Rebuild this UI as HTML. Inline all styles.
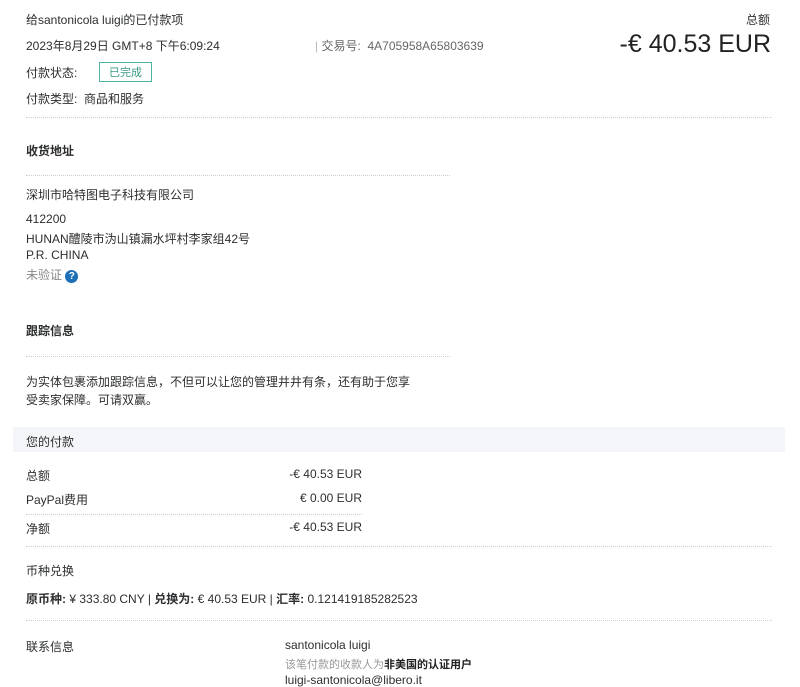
<!DOCTYPE html>
<html><head><meta charset="utf-8"><style>
body{margin:0;width:800px;height:683px;overflow:hidden;background:#fff;font-family:"Liberation Sans","Noto Sans CJK SC",sans-serif;font-size:12px;color:#2c2e2f;position:relative}
.a{position:absolute;white-space:nowrap}
.r{position:absolute;white-space:nowrap;text-align:right}
.hr{position:absolute;height:0;border-top:1px dotted #cfcfcf}
.b{font-weight:bold}
</style></head><body>
<div class="a" style="left:26px;top:11px">给santonicola luigi的已付款项</div>
<div class="a" style="left:26px;top:37px">2023年8月29日 GMT+8 下午6:09:24</div>
<div class="a" style="left:315px;top:37px;color:#666"><span style="color:#bbb">|</span> 交易号:&nbsp; 4A705958A65803639</div>
<div class="r" style="right:30px;top:11px;font-size:12px">总额</div>
<div class="r" style="right:29px;top:30px;font-size:25px;color:#222">-€ 40.53 EUR</div>
<div class="a" style="left:26px;top:64px">付款状态:</div>
<div class="a" style="left:99px;top:62px;border:1px solid #4db6a0;color:#3a9a86;padding:1px 9px;font-size:11px">已完成</div>
<div class="a" style="left:26px;top:90px">付款类型:&nbsp; 商品和服务</div>
<div class="hr" style="left:26px;top:117px;width:746px"></div>
<div class="a b" style="left:26px;top:142px">收货地址</div>
<div class="hr" style="left:26px;top:175px;width:424px"></div>
<div class="a" style="left:26px;top:186px">深圳市哈特图电子科技有限公司</div>
<div class="a" style="left:26px;top:212px">412200</div>
<div class="a" style="left:26px;top:230px">HUNAN醴陵市沩山镇漏水坪村李家组42号</div>
<div class="a" style="left:26px;top:248px">P.R. CHINA</div>
<div class="a" style="left:26px;top:266px;color:#888">未验证 <span style="display:inline-block;width:13px;height:13px;border-radius:50%;background:#1d6fb8;color:#fff;font-size:10px;text-align:center;line-height:13px;font-weight:bold">?</span></div>
<div class="a b" style="left:26px;top:322px">跟踪信息</div>
<div class="hr" style="left:26px;top:356px;width:424px"></div>
<div class="a" style="left:26px;top:373px">为实体包裹添加跟踪信息，不但可以让您的管理井井有条，还有助于您享</div>
<div class="a" style="left:26px;top:391px">受卖家保障。可请双赢。</div>
<div class="a" style="left:13px;top:427px;width:772px;height:25px;background:#f4f5f8"></div>
<div class="a" style="left:26px;top:433px">您的付款</div>
<div class="a" style="left:26px;top:467px">总额</div><div class="r" style="right:438px;top:467px">-€ 40.53 EUR</div>
<div class="a" style="left:26px;top:491px">PayPal费用</div><div class="r" style="right:438px;top:491px">€ 0.00 EUR</div>
<div class="hr" style="left:26px;top:514px;width:336px"></div>
<div class="a" style="left:26px;top:520px">净额</div><div class="r" style="right:438px;top:520px">-€ 40.53 EUR</div>
<div class="hr" style="left:26px;top:546px;width:746px"></div>
<div class="a" style="left:26px;top:562px">币种兑换</div>
<div class="a" style="left:26px;top:590px"><b>原币种:</b> ¥ 333.80 CNY | <b>兑换为:</b> € 40.53 EUR | <b>汇率:</b> 0.121419185282523</div>
<div class="hr" style="left:26px;top:620px;width:746px"></div>
<div class="a" style="left:26px;top:638px">联系信息</div>
<div class="a" style="left:285px;top:638px">santonicola luigi</div>
<div class="a" style="left:285px;top:656px;font-size:11px;color:#999">该笔付款的收款人为<b style="color:#222">非美国的认证用户</b></div>
<div class="a" style="left:285px;top:673px">luigi-santonicola@libero.it</div>
</body></html>
